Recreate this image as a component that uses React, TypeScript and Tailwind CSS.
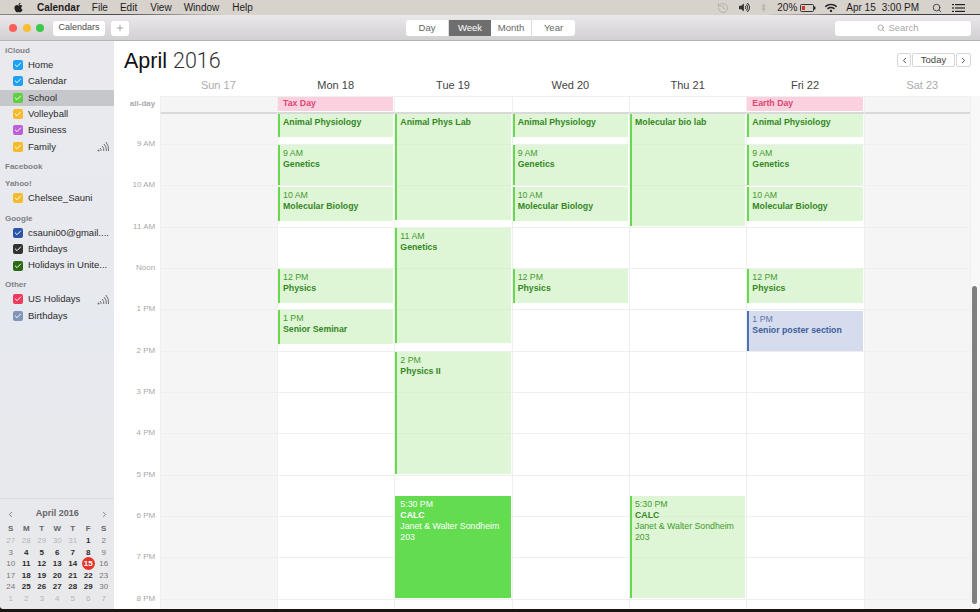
import { FaApple, FaBluetoothB, FaVolumeUp, FaWifi } from "react-icons/fa"
import { Check, ChevronLeft, ChevronRight, History, Plus, Search } from "lucide-react"

type CalItem = { name: string; color: string; feed?: boolean }
type CalEvent = { top: number; height: number; time?: string; title: string; extra?: string[]; kind?: "green" | "blue" | "solid" }

const sections: { label: string; items: CalItem[]; gap: string }[] = [
    {
        label: "iCloud",
        gap: "mt-[3px]",
        items: [
            { name: "Home", color: "#1ea1f2" },
            { name: "Calendar", color: "#1ea1f2" },
            { name: "School", color: "#5fd13f" },
            { name: "Volleyball", color: "#f6bb2a" },
            { name: "Business", color: "#bd5fd6" },
            { name: "Family", color: "#f6bb2a", feed: true },
        ],
    },
    { label: "Facebook", gap: "mt-[5px]", items: [] },
    { label: "Yahoo!", gap: "mt-[4px]", items: [{ name: "Chelsee_Sauni", color: "#f6bb2a" }] },
    {
        label: "Google",
        gap: "mt-[5.5px]",
        items: [
            { name: "csauni00@gmail....", color: "#2b56a8" },
            { name: "Birthdays", color: "#333333" },
            { name: "Holidays in Unite...", color: "#2a6b12" },
        ],
    },
    {
        label: "Other",
        gap: "mt-[4.5px]",
        items: [
            { name: "US Holidays", color: "#ef3a5d", feed: true },
            { name: "Birthdays", color: "#8096b8" },
        ],
    },
]

const days = [
    { label: "Sun 17", weekend: true },
    { label: "Mon 18" },
    { label: "Tue 19" },
    { label: "Wed 20" },
    { label: "Thu 21" },
    { label: "Fri 22" },
    { label: "Sat 23", weekend: true },
]

const hours = ["9 AM", "10 AM", "11 AM", "Noon", "1 PM", "2 PM", "3 PM", "4 PM", "5 PM", "6 PM", "7 PM", "8 PM"]

const physiology: CalEvent = { top: 0, height: 23, title: "Animal Physiology" }
const genetics: CalEvent = { top: 31, height: 40, time: "9 AM", title: "Genetics" }
const molecular: CalEvent = { top: 73, height: 34, time: "10 AM", title: "Molecular Biology" }
const physics: CalEvent = { top: 155, height: 34, time: "12 PM", title: "Physics" }
const calcExtra = ["Janet & Walter Sondheim", "203"]

const events: CalEvent[][] = [
    [],
    [physiology, genetics, molecular, physics, { top: 196, height: 34, time: "1 PM", title: "Senior Seminar" }],
    [
        { top: 0, height: 106, title: "Animal Phys Lab" },
        { top: 114, height: 115, time: "11 AM", title: "Genetics" },
        { top: 238, height: 122, time: "2 PM", title: "Physics II" },
        { top: 382, height: 102, time: "5:30 PM", title: "CALC", extra: calcExtra, kind: "solid" },
    ],
    [physiology, genetics, molecular, physics],
    [
        { top: 0, height: 112, title: "Molecular bio lab" },
        { top: 382, height: 102, time: "5:30 PM", title: "CALC", extra: calcExtra },
    ],
    [physiology, genetics, molecular, physics, { top: 197, height: 40, time: "1 PM", title: "Senior poster section", kind: "blue" }],
    [],
]

const miniWeeks = [
    ["27", "28", "29", "30", "31", "1", "2"],
    ["3", "4", "5", "6", "7", "8", "9"],
    ["10", "11", "12", "13", "14", "15", "16"],
    ["17", "18", "19", "20", "21", "22", "23"],
    ["24", "25", "26", "27", "28", "29", "30"],
    ["1", "2", "3", "4", "5", "6", "7"],
]

const FeedIcon = () => (
    <svg width="12" height="11" viewBox="0 0 12 11" fill="none" stroke="#6f6f6f" strokeWidth="1" className="ml-auto mr-[5px]">
        <circle cx="1.5" cy="9.5" r="1" fill="#6f6f6f" stroke="none" />
        <path d="M4 10a3.5 3.5 0 0 0-.8-3" />
        <path d="M6.8 10a6.5 6.5 0 0 0-1.6-5" />
        <path d="M9.4 10a9 9 0 0 0-2.4-7" />
        <path d="M11.5 10a11.5 11.5 0 0 0-2.6-9" />
    </svg>
)

const MenuBar = () => (
    <div className="relative flex h-[15px] shrink-0 items-center bg-[#d8d2cc] text-[10px] text-[#1c1c1c]">
        <FaApple className="ml-[13px] text-[11px] text-[#222]" />
        <span className="ml-[13px] font-bold">Calendar</span>
        <span className="ml-[12px]">File</span>
        <span className="ml-[12px]">Edit</span>
        <span className="ml-[13px]">View</span>
        <span className="ml-[12px]">Window</span>
        <span className="ml-[13px]">Help</span>
        <History size={12} strokeWidth={1.5} className="ml-auto text-[#a8a5a2]" />
        <FaVolumeUp className="ml-[10px] text-[11px] text-[#333]" />
        <FaBluetoothB className="ml-[9px] text-[9px] text-[#b3b0ad]" />
        <span className="ml-[9px]">20%</span>
        <svg width="16" height="8" viewBox="0 0 16 8" className="ml-[3px]">
            <rect x="0.5" y="0.5" width="13" height="7" rx="1" fill="none" stroke="#333" />
            <rect x="2" y="2" width="3" height="4" fill="#d9342b" />
            <rect x="14" y="2.5" width="1.5" height="3" fill="#333" />
        </svg>
        <FaWifi className="ml-[9px] text-[12px] text-[#222]" />
        <span className="ml-[9px]">Apr 15</span>
        <span className="ml-[6px]">3:00 PM</span>
        <Search size={10} strokeWidth={2} className="ml-[13px] text-[#333]" />
        <svg width="13" height="8" viewBox="0 0 13 8" className="ml-[10px] mr-[15px]" fill="#222">
            <rect x="0" y="0" width="2" height="1.2" />
            <rect x="3" y="0" width="10" height="1.2" />
            <rect x="0" y="3.4" width="2" height="1.2" />
            <rect x="3" y="3.4" width="10" height="1.2" />
            <rect x="0" y="6.8" width="2" height="1.2" />
            <rect x="3" y="6.8" width="10" height="1.2" />
        </svg>
        <div className="absolute bottom-0 left-0 h-px w-[225px] bg-gradient-to-r from-[#8a8580] via-[#4a4a4a] to-[#d8d2cc]" />
        <div className="absolute bottom-0 right-0 h-px w-[215px] bg-gradient-to-r from-[#d8d2cc] via-[#3c3c3c] to-[#3c3c3c]" />
    </div>
)

const Toolbar = () => (
    <div className="flex h-[26px] shrink-0 items-center border-b border-[#b4b4b6] bg-gradient-to-b from-[#eae8ea] to-[#d2d0d3] pt-px text-[9.5px] text-[#4a4a4a]">
        <span className="ml-[9px] h-[8px] w-[8px] rounded-full bg-[#fb5f57]" />
        <span className="ml-[6px] h-[8px] w-[8px] rounded-full bg-[#fcbd30]" />
        <span className="ml-[5px] h-[8px] w-[8px] rounded-full bg-[#3ac948]" />
        <div className="ml-[9px] flex h-[15px] w-[52px] items-center justify-center rounded-[3px] bg-white text-[9px]">Calendars</div>
        <div className="ml-[6px] flex h-[15px] w-[18px] items-center justify-center rounded-[3px] bg-white text-[#777]">
            <Plus size={10} strokeWidth={1.5} />
        </div>
        <div className="ml-[277px] flex h-[16px] overflow-hidden rounded-[3px] bg-white text-[#666]">
            <div className="flex w-[43px] items-center justify-center border-r border-[#ddd]">Day</div>
            <div className="flex w-[42px] items-center justify-center bg-[#6e6e6e] text-white">Week</div>
            <div className="flex w-[41px] items-center justify-center border-r border-[#ddd]">Month</div>
            <div className="flex w-[43px] items-center justify-center">Year</div>
        </div>
        <div className="ml-[260px] flex h-[15px] w-[136px] items-center justify-center gap-[3px] rounded-[3px] bg-white text-[#a8a8a8]">
            <Search size={8} strokeWidth={2} className="text-[#888]" />
            <span className="pr-[10px]">Search</span>
        </div>
    </div>
)

const Sidebar = () => (
    <div className="flex w-[114px] shrink-0 flex-col bg-gradient-to-b from-[#eaeaee] via-[#e6e9ef] to-[#e9e9eb] text-[9.5px] text-[#2b2b2b]">
        {sections.map((section) => (
            <div key={section.label} className={section.gap}>
                <div className="flex h-[13px] items-center pl-[5px] pt-px text-[8px] font-bold text-[#808084]">{section.label}</div>
                {section.items.map((item) => (
                    <div key={item.name} className={`flex h-[16.33px] items-center pl-[13px] ${item.name === "School" ? "bg-[#c5c7ca]" : ""}`}>
                        <span className="flex h-[10px] w-[10px] items-center justify-center rounded-[2px]" style={{ backgroundColor: item.color }}>
                            <Check size={8} strokeWidth={3} className="text-white" />
                        </span>
                        <span className="ml-[5px] whitespace-nowrap">{item.name}</span>
                        {item.feed && <FeedIcon />}
                    </div>
                ))}
            </div>
        ))}
        <div className="mt-auto flex flex-col border-t border-[#dcdcdf] pb-[5px] pl-[3px] pr-[2.5px] pt-[5px]">
            <div className="flex h-[20px] items-center justify-between px-[3px] text-[9px] font-bold text-[#666]">
                <ChevronLeft size={9} className="text-[#666]" />
                <span>April 2016</span>
                <ChevronRight size={9} className="text-[#666]" />
            </div>
            <div className="-mt-px grid h-[12px] grid-cols-7 text-center text-[8px] font-bold leading-[11px] text-[#666]">
                {["S", "M", "T", "W", "T", "F", "S"].map((d, i) => (
                    <span key={i}>{d}</span>
                ))}
            </div>
            {miniWeeks.map((week, w) => (
                <div key={w} className="grid h-[11.5px] grid-cols-7 text-center text-[8px] font-bold leading-[11.5px]">
                    {week.map((d, i) => {
                        const outside = w === 5 || (w === 0 && i < 5)
                        const weekend = i === 0 || i === 6
                        if (d === "15") {
                            return (
                                <span key={i} className="relative z-10 mx-auto -my-[1px] flex h-[13px] w-[13px] items-center justify-center rounded-full bg-[#e5352b] text-white">
                                    15
                                </span>
                            )
                        }
                        return (
                            <span key={i} className={outside ? "font-normal text-[#b5b5b8]" : weekend ? "font-normal text-[#77777a]" : "text-[#2b2b2b]"}>
                                {d}
                            </span>
                        )
                    })}
                </div>
            ))}
        </div>
    </div>
)

const EventBox = ({ event }: { event: CalEvent }) => {
    const kind = event.kind ?? "green"
    const box = {
        green: "border-l-2 border-[#67d94f] bg-[#d1f2c4]/70 text-[#3f9a2e] pl-[3px]",
        blue: "border-l-2 border-[#4e70b6] bg-[#d5dced] text-[#5c76aa] pl-[3px]",
        solid: "bg-[#64dc50] text-white pl-[5px]",
    }[kind]
    const strong = { green: "text-[#33881f]", blue: "text-[#3f5e9c]", solid: "text-white" }[kind]
    return (
        <div className={`absolute left-0 right-px overflow-hidden pt-[3px] text-[8.75px] leading-[11px] ${box}`} style={{ top: event.top, height: event.height }}>
            {event.time && <div>{event.time}</div>}
            <div className={`font-bold ${strong}`}>{event.title}</div>
            {event.extra?.map((line) => (
                <div key={line}>{line}</div>
            ))}
        </div>
    )
}

const HourLines = () => (
    <>
        <div className="h-[30px]" />
        {hours.map((h) => (
            <div key={h} className="h-[41.33px] border-t border-[#efefef]" />
        ))}
    </>
)

const Week = () => (
    <div className="relative flex min-w-0 flex-1 flex-col overflow-hidden bg-white">
        <div className="flex h-[37px] shrink-0 items-start justify-between pl-[10px] pr-[9px] pt-[5px]">
            <div className="text-[21.5px] leading-[30px] text-[#111]">
                April <span className="font-['Roboto'] font-light text-[#333]">2016</span>
            </div>
            <div className="mt-[7px] flex h-[14px] gap-px text-[9.5px] text-[#444]">
                <div className="flex w-[14px] items-center justify-center rounded-[2px] border border-[#d6d6d6]">
                    <ChevronLeft size={9} strokeWidth={2.5} />
                </div>
                <div className="flex w-[43px] items-center justify-center rounded-[2px] border border-[#d6d6d6]">Today</div>
                <div className="flex w-[15px] items-center justify-center rounded-[2px] border border-[#d6d6d6]">
                    <ChevronRight size={9} strokeWidth={2.5} />
                </div>
            </div>
        </div>
        <div className="flex h-[14px] shrink-0 items-center text-[11px]">
            <div className="w-[45.7px] shrink-0" />
            {days.map((d) => (
                <div key={d.label} className={`w-[117.33px] shrink-0 text-center ${d.weekend ? "text-[#ababab]" : "text-[#444]"}`}>
                    {d.label}
                </div>
            ))}
        </div>
        <div className="mt-[4px] flex h-[18px] shrink-0">
            <div className="w-[45.7px] shrink-0 pr-[4.5px] pt-[3px] text-right text-[8px] font-bold leading-[10px] text-[#a9a9a9]">all-day</div>
            {days.map((d) => (
                <div key={d.label} className={`w-[117.33px] shrink-0 border-b-2 border-l border-t border-b-[#d9d9d9] border-l-[#efefef] border-t-[#efefef] pr-px ${d.weekend ? "bg-[#f5f5f5]" : ""}`}>
                    {d.label === "Mon 18" && <div className="flex h-[14px] items-center bg-[#fbd1df] pl-[5px] text-[8.75px] font-bold text-[#d94672]">Tax Day</div>}
                    {d.label === "Fri 22" && <div className="flex h-[14px] items-center bg-[#fbd1df] pl-[5px] text-[8.75px] font-bold text-[#d94672]">Earth Day</div>}
                </div>
            ))}
        </div>
        <div className="flex min-h-0 flex-1 overflow-hidden">
            <div className="flex w-[45.7px] shrink-0 flex-col">
                <div className="h-[25px] shrink-0" />
                {hours.map((h) => (
                    <div key={h} className="h-[41.33px] shrink-0 pr-[4.5px] text-right text-[8px] leading-[10px] text-[#a9a9a9]">
                        {h}
                    </div>
                ))}
            </div>
            {days.map((d, i) => (
                <div key={d.label} className={`relative w-[117.33px] shrink-0 border-l border-[#efefef] ${d.weekend ? "bg-[#f5f5f5]" : ""}`}>
                    <HourLines />
                    {events[i]!.map((e) => (
                        <EventBox key={e.title + e.top} event={e} />
                    ))}
                </div>
            ))}
        </div>
        <div className="absolute bottom-0 right-0 top-[55px] w-[10px] border-l border-[#efefef] bg-[#f8f8f8]" />
        <div className="absolute right-[3px] top-[245px] h-[318px] w-[5px] rounded-full bg-[#7f7f7f]" />
    </div>
)

export default function App() {
    return (
        <div className="flex h-[612px] w-[980px] flex-col overflow-hidden bg-[#1a1412] font-['Liberation_Sans',sans-serif]">
            <MenuBar />
            <div className="flex h-[594px] shrink-0 flex-col overflow-hidden rounded-b-[3px]">
                <Toolbar />
                <div className="flex min-h-0 flex-1">
                    <Sidebar />
                    <Week />
                </div>
            </div>
        </div>
    )
}
